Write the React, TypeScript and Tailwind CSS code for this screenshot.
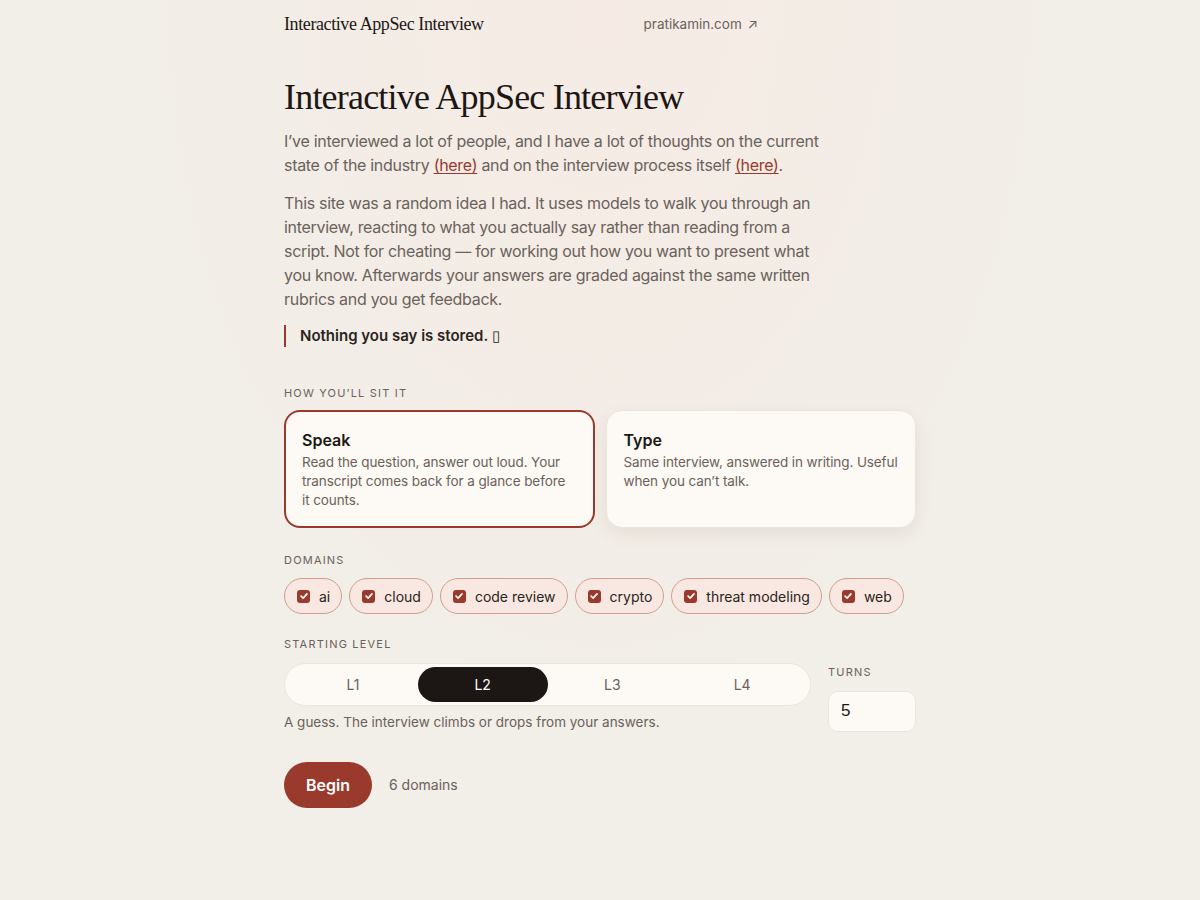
import React from "react";

const sans = "font-['Inter','Noto_Sans',sans-serif]";

function Check() {
  return (
    <span className="flex h-[13px] w-[13px] items-center justify-center rounded-[3px] bg-[#9a3a2c]">
      <svg viewBox="0 0 12 12" className="h-[10px] w-[10px]" fill="none" stroke="white" strokeWidth="2" strokeLinecap="round" strokeLinejoin="round">
        <path d="M2.5 6.2 5 8.6 9.6 3.4" />
      </svg>
    </span>
  );
}

export default function App() {
  const domains = ["ai", "cloud", "code review", "crypto", "threat modeling", "web"];
  const levels = ["L1", "L2", "L3", "L4"];
  return (
    <div className={`min-h-screen bg-[#f2eee8] bg-[radial-gradient(ellipse_at_top,#f5ebe4_0%,#f2eee8_55%)] ${sans} text-[#1c1714]`}>
      <div className="mx-auto w-[632px]">
        <header className="flex h-[49px] w-[474px] items-center justify-between">
          <div className="font-['Liberation_Serif',serif] text-[18px] tracking-[-0.4px] text-[#1c1714]">Interactive AppSec Interview</div>
          <div className="text-[13.5px] text-[#6b625b]">pratikamin.com <span className="ml-[2px]">↗</span></div>
        </header>

        <h1 className="mt-[25px] font-['Liberation_Serif',serif] text-[36px] leading-[46px] tracking-[-0.8px] text-[#1c1714]">Interactive AppSec Interview</h1>

        <div className="mt-[9px] w-[545px] text-[16px] leading-[24px] tracking-[-0.3px] text-[#6b625b]">
          <p>
            I’ve interviewed a lot of people, and I have a lot of thoughts on the current state of the industry{" "}
            <a className="text-[#9a3a2c] underline underline-offset-2">(here)</a> and on the interview process itself{" "}
            <a className="text-[#9a3a2c] underline underline-offset-2">(here)</a>.
          </p>
          <p className="mt-[14px]">
            This site was a random idea I had. It uses models to walk you through an interview, reacting to what you actually say rather than reading from a script. Not for cheating — for working out how you want to present what you know. Afterwards your answers are graded against the same written rubrics and you get feedback.
          </p>
          <div className="mt-[14px] border-l-2 border-[#9a3a2c] pl-[14px] text-[15px] font-semibold leading-[22px] tracking-normal text-[#2a2420]">
            Nothing you say is stored. <span className="font-normal">▯</span>
          </div>
        </div>

        <div className="mt-[38px] text-[11px] uppercase tracking-[1.2px] text-[#6b625b]">How you’ll sit it</div>
        <div className="mt-[8px] grid grid-cols-2 gap-[11px]">
          <div className="h-[118px] rounded-[16px] border-2 border-[#9a3a2c] bg-[#fdf9f4] py-[16px] pl-[16px] pr-[22px]">
            <div className="text-[16px] font-semibold leading-[24px] text-[#1c1714]">Speak</div>
            <div className="mt-[1px] text-[13.5px] leading-[19px] tracking-[-0.1px] text-[#6b625b]">Read the question, answer out loud. Your transcript comes back for a glance before it counts.</div>
          </div>
          <div className="h-[118px] rounded-[16px] border border-[#ece5dd] bg-[#fdf9f4] py-[17px] pl-[17px] pr-[12px] shadow-[0_6px_18px_rgba(80,50,30,0.08)]">
            <div className="text-[16px] font-semibold leading-[24px] text-[#1c1714]">Type</div>
            <div className="mt-[1px] text-[13.5px] leading-[19px] tracking-[-0.1px] text-[#6b625b]">Same interview, answered in writing. Useful when you can’t talk.</div>
          </div>
        </div>

        <div className="mt-[24px] text-[11px] uppercase tracking-[1.2px] text-[#6b625b]">Domains</div>
        <div className="mt-[10px] flex flex-wrap gap-[7px]">
          {domains.map((d) => (
            <div key={d} className="flex h-[36px] items-center gap-[9px] rounded-full border border-[#cf9e90] bg-[#f8e8e1] pl-[12px] pr-[11px] text-[14px] text-[#2a2420]">
              <Check />
              <span>{d}</span>
            </div>
          ))}
        </div>

        <div className="mt-[22px] flex items-end gap-[17px]">
          <div className="flex-1">
            <div className="text-[11px] uppercase tracking-[1.2px] text-[#6b625b]">Starting level</div>
            <div className="mt-[10px] grid h-[43px] grid-cols-4 rounded-full border border-[#ece5dd] bg-[#fdf9f4] p-[3px]">
              {levels.map((l) => (
                <div key={l} className={`flex items-center justify-center rounded-full text-[14px] ${l === "L2" ? "bg-[#1c1714] text-white" : "text-[#6b625b]"}`}>{l}</div>
              ))}
            </div>
            <div className="mt-[6px] text-[13.5px] leading-[20px] text-[#6b625b]">A guess. The interview climbs or drops from your answers.</div>
          </div>
          <div className="w-[88px]">
            <div className="text-[11px] uppercase tracking-[1.2px] text-[#6b625b]">Turns</div>
            <div className="mt-[10px] flex h-[41px] items-center rounded-[10px] border border-[#ece5dd] bg-[#fdf9f4] px-[12px] font-['Liberation_Sans',sans-serif] text-[17px] text-[#1c1714]">5</div>
          </div>
        </div>

        <div className="mt-[30px] flex items-center gap-[17px]">
          <button className="h-[46px] rounded-full bg-[#9a3a2c] px-[22px] text-[16px] font-semibold text-white">Begin</button>
          <span className="text-[14px] text-[#6b625b]">6 domains</span>
        </div>
      </div>
    </div>
  );
}
